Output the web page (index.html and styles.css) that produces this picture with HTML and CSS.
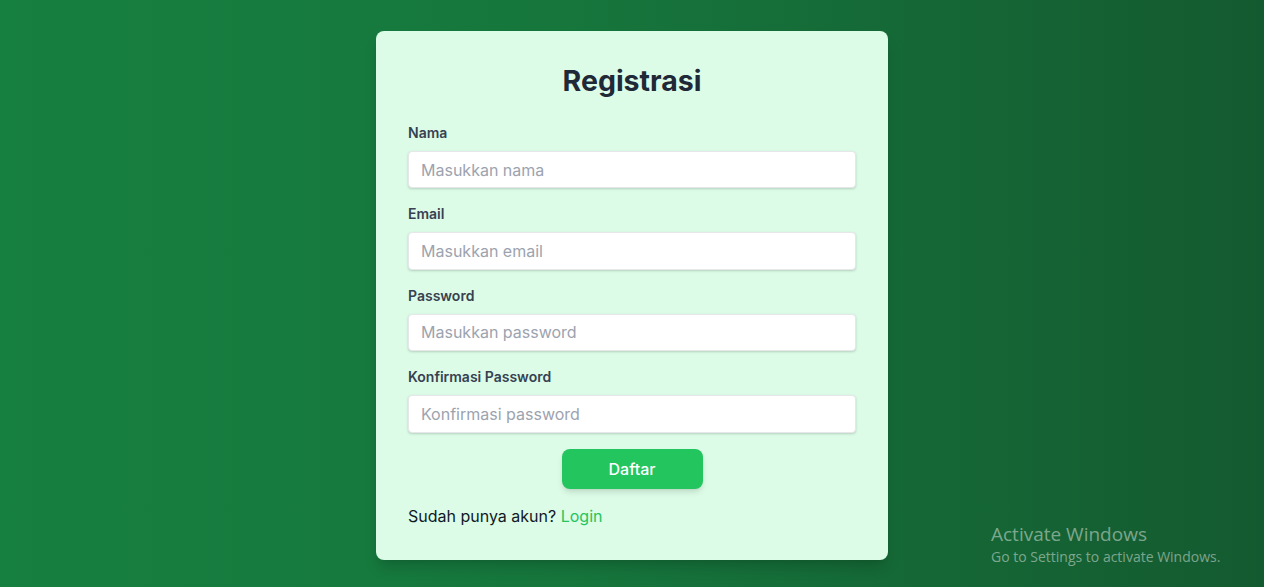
FILE: index.html
```html
<!DOCTYPE html>
<html lang="id">
<head>
<meta charset="utf-8">
<title>Registrasi</title>
<link rel="stylesheet" href="styles.css">
</head>
<body>
<main class="page">
  <form class="card">
    <h1 class="title">Registrasi</h1>
    <div class="field">
      <label class="label" for="nama">Nama</label>
      <input class="input" id="nama" type="text" placeholder="Masukkan nama">
    </div>
    <div class="field">
      <label class="label" for="email">Email</label>
      <input class="input" id="email" type="email" placeholder="Masukkan email">
    </div>
    <div class="field">
      <label class="label" for="pw">Password</label>
      <input class="input" id="pw" type="password" placeholder="Masukkan password">
    </div>
    <div class="field">
      <label class="label" for="pw2">Konfirmasi Password</label>
      <input class="input" id="pw2" type="password" placeholder="Konfirmasi password">
    </div>
    <div class="actions">
      <button class="btn" type="button">Daftar</button>
    </div>
    <p class="foot">Sudah punya akun? <a class="link" href="#">Login</a></p>
  </form>
  <div class="watermark">
    <div class="wm-title">Activate Windows</div>
    <div class="wm-sub">Go to Settings to activate Windows.</div>
  </div>
</main>
</body>
</html>
```

FILE: styles.css
```css
* { box-sizing: border-box; }
html, body { margin: 0; padding: 0; height: 100%; }
body {
  font-family: Inter, "Noto Sans", sans-serif;
  background: linear-gradient(to right, #168040 0%, #16763c 45%, #145a30 100%);
  overflow: hidden;
}
.page {
  position: relative;
  height: 587px;
  display: flex;
  justify-content: center;
  padding-top: 31px;
}
.card {
  width: 512px;
  height: 529px;
  background: #dcfce7;
  border-radius: 8px;
  padding: 32px;
  box-shadow: 0 10px 15px -3px rgba(0,0,0,0.15), 0 4px 6px -4px rgba(0,0,0,0.1);
}
.title {
  margin: 0 0 24px;
  text-align: center;
  font-size: 28.5px;
  line-height: 36px;
  font-weight: 700;
  color: #1f2937;
}
.field { margin-bottom: 16px; }
.label {
  display: block;
  font-size: 14px;
  line-height: 20px;
  font-weight: 600;
  color: #374151;
  margin-bottom: 8px;
}
.input {
  display: block;
  width: 100%;
  height: 37.4px;
  padding: 0 12px;
  font-family: inherit;
  font-size: 16px;
  color: #374151;
  background: #fff;
  border: 1px solid #e5e7eb;
  border-radius: 4px;
  box-shadow: 0 1px 3px rgba(0,0,0,0.12), 0 1px 2px rgba(0,0,0,0.06);
  outline: none;
}
.input::placeholder { color: #9ca3af; }
.actions {
  display: flex;
  justify-content: center;
  margin-top: 16px;
}
.btn {
  width: 141px;
  height: 40px;
  border: none;
  border-radius: 8px;
  background: #22c55e;
  color: #fff;
  font-family: inherit;
  font-size: 16px;
  font-weight: 500;
  box-shadow: 0 4px 6px -1px rgba(0,0,0,0.12), 0 2px 4px -2px rgba(0,0,0,0.08);
}
.foot {
  margin: 15px 0 0;
  font-size: 16px;
  line-height: 24px;
  color: #111827;
}
.link { color: #22c55e; text-decoration: none; }
.watermark {
  position: absolute;
  left: 991px;
  top: 522px;
  font-family: "Open Sans", "Noto Sans", sans-serif;
  color: rgba(255,255,255,0.45);
}
.wm-title { font-size: 19px; line-height: 25px; }
.wm-sub { font-size: 14px; line-height: 20px; }
```
